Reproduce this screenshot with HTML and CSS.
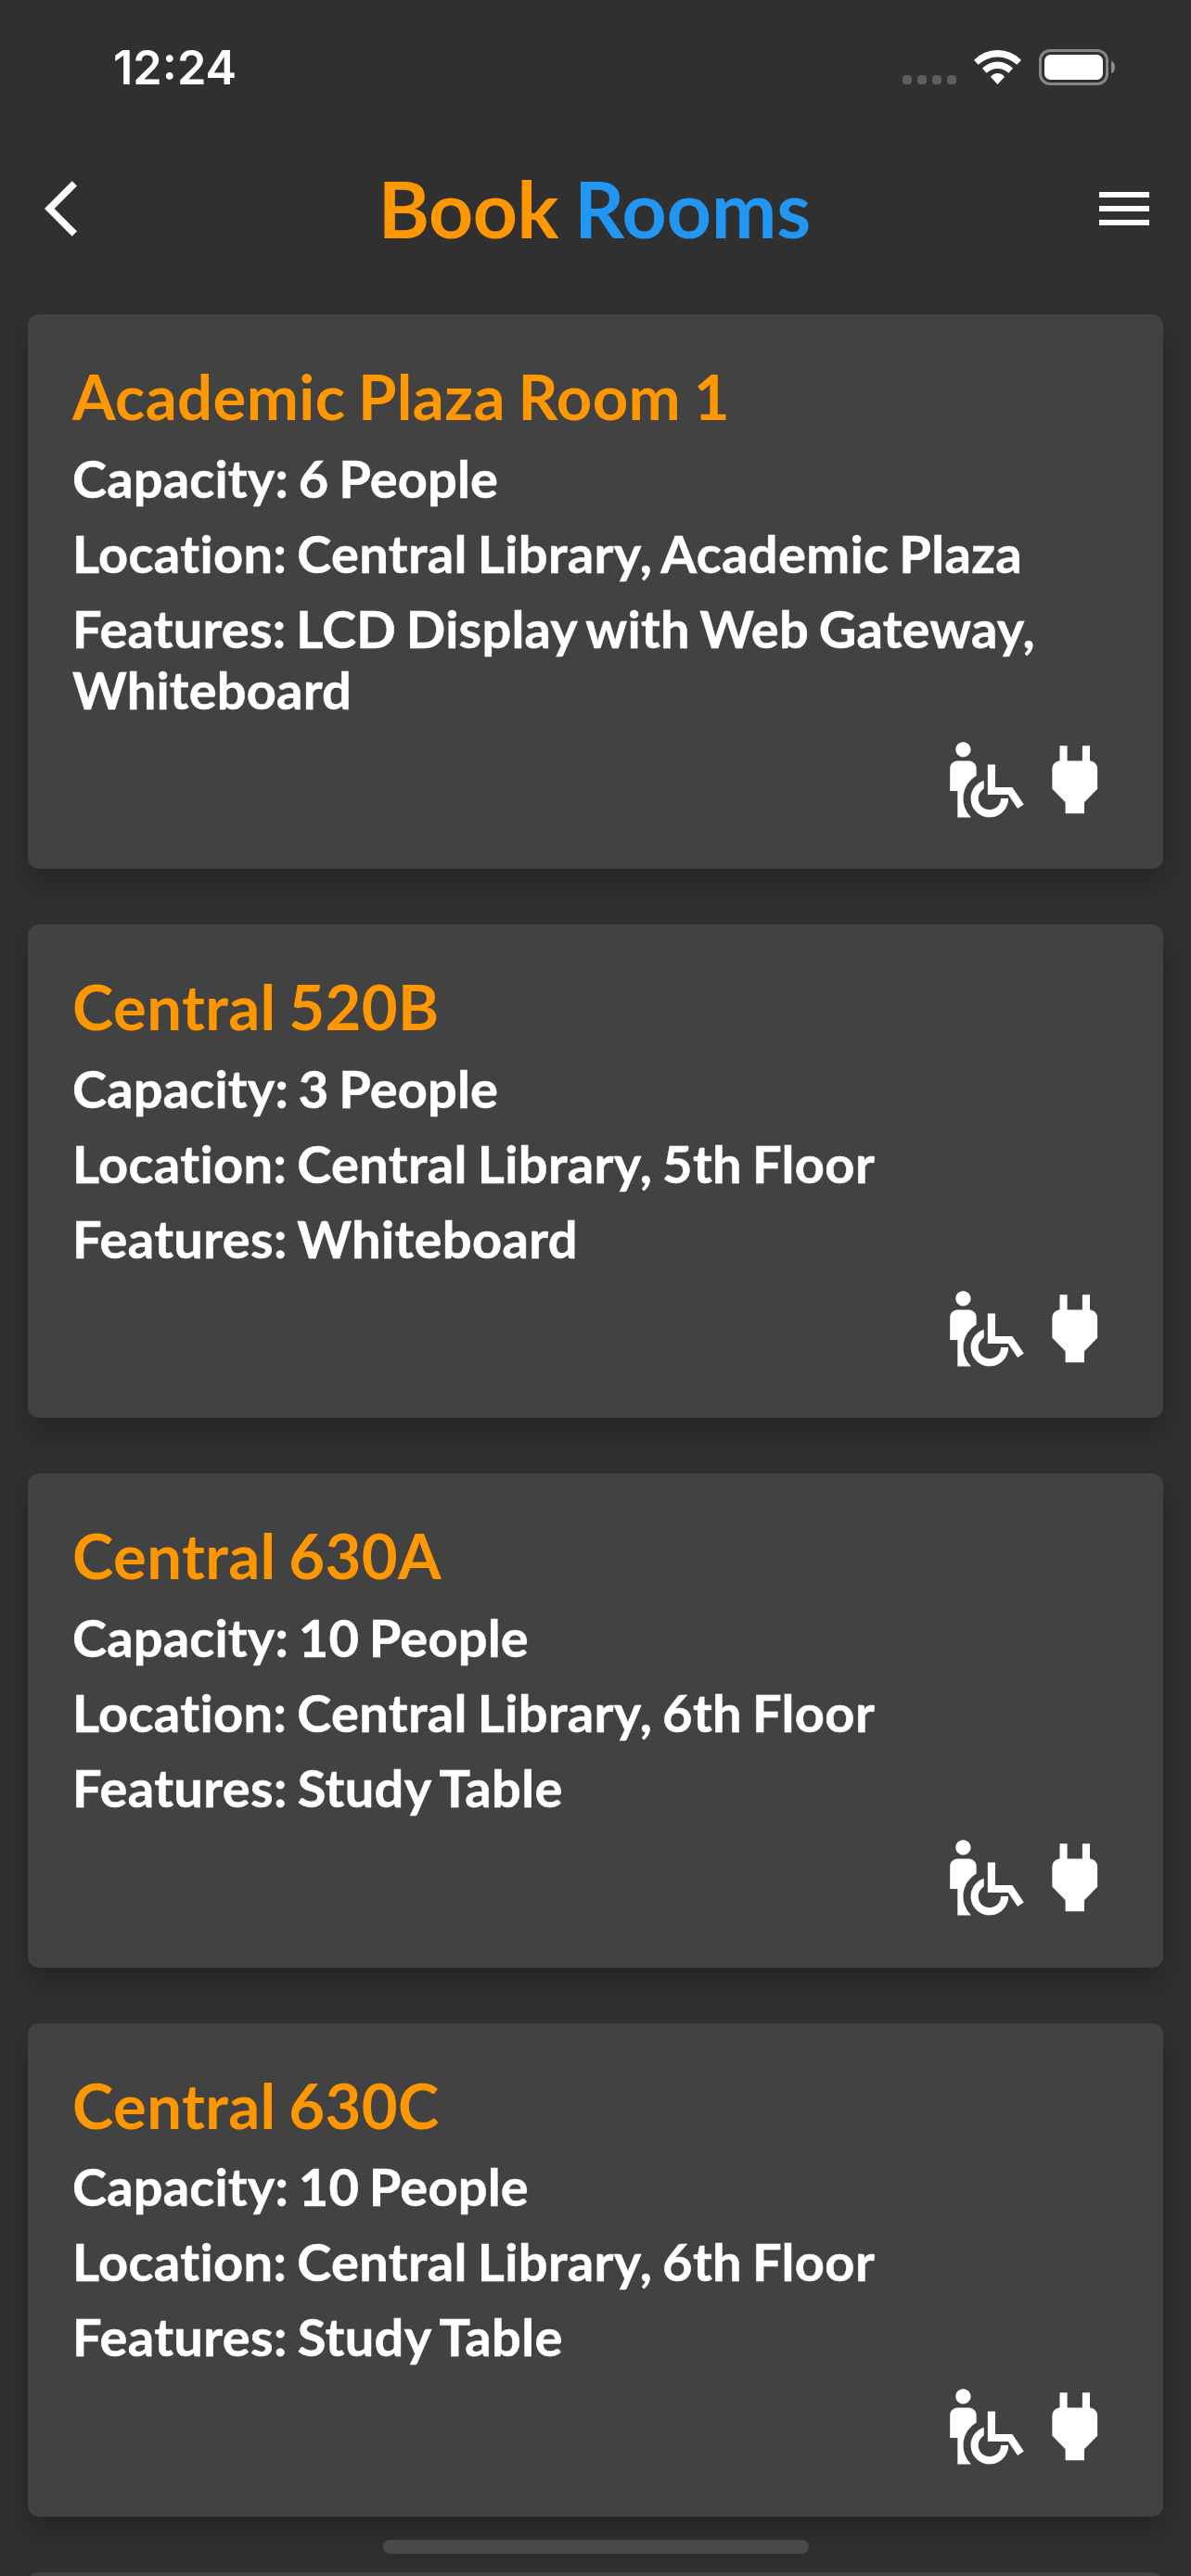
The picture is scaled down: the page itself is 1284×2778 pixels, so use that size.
FILE: index.html
```html
<!DOCTYPE html>
<html lang="en">
<head>
<meta charset="utf-8">
<title>Book Rooms</title>
<link rel="stylesheet" href="styles.css">
</head>
<body>
<svg width="0" height="0" class="sprite" aria-hidden="true">
  <symbol id="wheelchair-pickup" viewBox="0 0 24 24">
    <path d="M4.5 4c0-1.11.89-2 2-2s2 .89 2 2-.89 2-2 2-2-.89-2-2zM10 10.940V9c0-1.100-.900-2-2-2H5c-1.100 0-2 .900-2 2v6h2v7h3.600A7 7 0 0 1 10 10.940zM16.500 17a3 3 0 1 1-4.500-2.600V12.230A5 5 0 1 0 18.500 17zM19.540 14H15V8h-2v8h5.460l2.470 3.710 1.660-1.110z"/>
  </symbol>
  <symbol id="power" viewBox="0 0 24 24">
    <path d="M16.010 7L16 3h-2v4h-4V3H8v4h-.010C7 6.990 6 7.990 6 8.990v5.490L9.500 18v3h5v-3l3.500-3.510v-5.500c0-1-1-2-1.990-1.990z"/>
  </symbol>
</svg>
<div class="screen">
  <div class="status-bar">
    <span class="time">12:24</span>
    <div class="indicators">
      <div class="cell-dots"><i></i><i></i><i></i><i></i></div>
      <svg class="wifi" viewBox="0 0 51 37">
        <path d="M0 10.800A35.500 35.500 0 0 1 51 10.800L46.300 15.800A30.200 30.200 0 0 0 4.700 15.800zM9 19.800A22.300 22.300 0 0 1 42 19.800L37.300 24.800A16.900 16.900 0 0 0 13.700 24.800zM18 29A9 9 0 0 1 33 29L25.500 37z"/>
      </svg>
      <div class="battery">
        <div class="battery-case"><div class="battery-level"></div></div>
        <div class="battery-tip"></div>
      </div>
    </div>
  </div>

  <header class="app-bar">
    <svg class="back" viewBox="0 0 24 24"><path d="M11.670 3.870L9.900 2.100 0 12l9.900 9.900 1.770-1.770L3.540 12z"/></svg>
    <h1 class="title"><span class="title-book">Book</span> <span class="title-rooms">Rooms</span></h1>
    <svg class="menu" viewBox="0 0 24 24"><path d="M3 18h18v-2H3v2zm0-5h18v-2H3v2zm0-7v2h18V6H3z"/></svg>
  </header>

  <main class="rooms">
    <article class="card">
      <h2 class="name">Academic Plaza Room 1</h2>
      <p class="detail">Capacity: 6 People</p>
      <p class="detail">Location: Central Library, Academic Plaza</p>
      <p class="detail detail-long">Features: LCD Display with Web Gateway, Whiteboard</p>
      <div class="amenities"><svg><use href="#wheelchair-pickup"/></svg><svg><use href="#power"/></svg></div>
    </article>
    <article class="card">
      <h2 class="name">Central 520B</h2>
      <p class="detail">Capacity: 3 People</p>
      <p class="detail">Location: Central Library, 5th Floor</p>
      <p class="detail">Features: Whiteboard</p>
      <div class="amenities"><svg><use href="#wheelchair-pickup"/></svg><svg><use href="#power"/></svg></div>
    </article>
    <article class="card">
      <h2 class="name">Central 630A</h2>
      <p class="detail">Capacity: 10 People</p>
      <p class="detail">Location: Central Library, 6th Floor</p>
      <p class="detail">Features: Study Table</p>
      <div class="amenities"><svg><use href="#wheelchair-pickup"/></svg><svg><use href="#power"/></svg></div>
    </article>
    <article class="card">
      <h2 class="name">Central 630C</h2>
      <p class="detail">Capacity: 10 People</p>
      <p class="detail">Location: Central Library, 6th Floor</p>
      <p class="detail">Features: Study Table</p>
      <div class="amenities"><svg><use href="#wheelchair-pickup"/></svg><svg><use href="#power"/></svg></div>
    </article>
    <article class="card"></article>
  </main>

  <div class="home-indicator"></div>
</div>
</body>
</html>
```

FILE: styles.css
```css
* {
  box-sizing: border-box;
  margin: 0;
  padding: 0;
}

body {
  background: #303030;
  color: #fff;
  font-family: Lato, "Open Sans", sans-serif;
}

svg {
  display: block;
  fill: #fff;
}

.sprite {
  position: absolute;
}

.screen {
  position: relative;
  display: flex;
  flex-direction: column;
  width: 1284px;
  height: 2778px;
  overflow: hidden;
}

/* Status bar */
.status-bar {
  display: flex;
  flex: none;
  justify-content: space-between;
  height: 153px;
  padding: 53px 82px 0 122px;
}

.time {
  font: 600 50.5px/40px Inter, sans-serif;
}

.indicators {
  display: flex;
  align-items: flex-start;
  height: 39px;
}

.cell-dots {
  display: flex;
  gap: 6px;
  margin: 28px 19px 0 0;
}

.cell-dots i {
  width: 10px;
  height: 10px;
  border-radius: 3.5px;
  background: #5d5d5d;
}

.wifi {
  width: 51px;
  height: 37px;
  margin: 1px 19px 0 0;
}

.battery {
  display: flex;
  align-items: center;
  gap: 3px;
}

.battery-case {
  width: 75px;
  height: 39px;
  padding: 3px;
  border: 3px solid #868686;
  border-radius: 12px;
}

.battery-level {
  height: 27px;
  border-radius: 6.5px;
  background: #fff;
}

.battery-tip {
  width: 4px;
  height: 13px;
  border-radius: 0 4px 4px 0 / 0 6.5px 6.5px 0;
  background: #8c8c8c;
}

/* App bar */
.app-bar {
  display: flex;
  flex: none;
  align-items: center;
  justify-content: space-between;
  height: 144px;
  padding: 0 36px 0 48px;
}

.back,
.menu {
  width: 72px;
  height: 72px;
}

.title {
  margin-right: 14px;
  font-size: 84px;
  line-height: 100px;
  word-spacing: -3px;
}

.title-book {
  color: #ff9800;
  letter-spacing: -0.5px;
}

.title-rooms {
  color: #2196f3;
}

/* Room list */
.rooms {
  display: flex;
  flex-direction: column;
  flex: none;
  gap: 60px;
  padding: 42px 30px 0;
}

.card {
  display: flex;
  flex-direction: column;
  gap: 15px;
  min-height: 532px;
  padding: 48px 47px 48px 48px;
  border-radius: 12px;
  background: #424242;
  box-shadow: 0 15px 30px rgba(0, 0, 0, 0.25);
}

.name {
  margin-bottom: 0.6px;
  color: #ff9800;
  font-size: 67px;
  line-height: 80.1px;
  letter-spacing: 0.4px;
  word-spacing: -3px;
}

.detail {
  font-size: 56px;
  font-weight: 700;
  line-height: 66px;
  letter-spacing: 0.35px;
  word-spacing: -3px;
  -webkit-text-stroke: 0.5px currentColor;
}

.name + .detail {
  letter-spacing: 0.15px;
}

.detail-long {
  letter-spacing: 0.2px;
}

.amenities {
  display: flex;
  justify-content: flex-end;
}

.amenities svg {
  width: 97.5px;
  height: 97.5px;
}

.home-indicator {
  position: absolute;
  left: 413px;
  bottom: 24px;
  width: 459px;
  height: 15px;
  border-radius: 7.5px;
  background: #494949;
}
```
